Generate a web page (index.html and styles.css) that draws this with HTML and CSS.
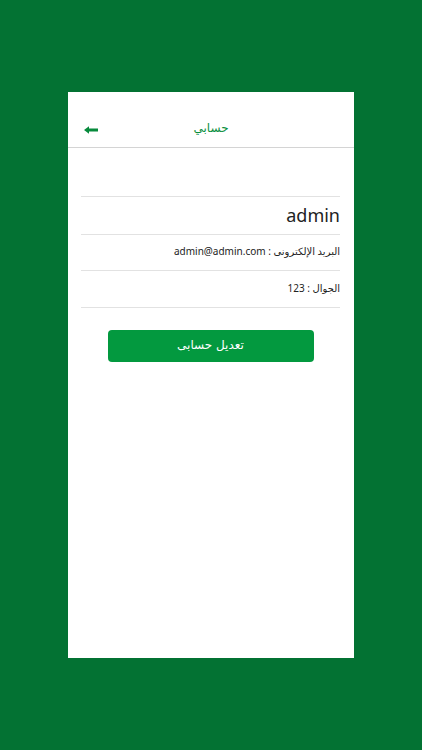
FILE: index.html
```html
<!DOCTYPE html>
<html lang="ar" dir="rtl">
<head>
<meta charset="utf-8">
<link rel="stylesheet" href="styles.css">
</head>
<body>
<div class="card">
  <header class="bar">
    <span class="title">حسابي</span>
    <span class="back" aria-label="back">
      <svg width="15" height="8" viewBox="0 0 15 8"><path d="M0 4 L5 0.3 L5 2.4 L14 2.4 L14 5.6 L5 5.6 L5 7.7 Z" fill="#078a3c"/></svg>
    </span>
  </header>
  <main class="content">
    <div class="row name">admin</div>
    <div class="row info">البريد الإلكترونى : admin@admin.com</div>
    <div class="row info last">الجوال : 123</div>
    <div class="actions"><button class="btn">تعديل حسابى</button></div>
  </main>
</div>
</body>
</html>
```
FILE: styles.css
```css
html, body { margin: 0; padding: 0; }
body {
  background: #037233;
  width: 422px;
  height: 750px;
  font-family: "Noto Sans", "DejaVu Sans", sans-serif;
  overflow: hidden;
  padding-top: 92px;
  box-sizing: border-box;
}
.card {
  background: #fff;
  width: 286px;
  height: 566px;
  margin: 0 auto;
  box-sizing: border-box;
}
.bar {
  height: 56px;
  border-bottom: 1px solid #d4d4d4;
  box-sizing: border-box;
  position: relative;
  display: flex;
  align-items: center;
  justify-content: center;
  padding-top: 17px;
}
.title {
  color: #0a8f3e;
  font-size: 12px;
  font-family: "DejaVu Sans", sans-serif;
}
.back {
  position: absolute;
  left: 16px;
  top: 34px;
  line-height: 0;
}
.content {
  padding: 48px 14px 0 13px;
}
.row {
  border-top: 1px solid #e2e2e2;
  display: flex;
  align-items: center;
  color: #222;
  box-sizing: border-box;
}
.name {
  height: 38px;
  font-size: 18px;
  padding-bottom: 1px;
}
.info {
  height: 36px;
  font-size: 10px;
  color: #222;
  padding-bottom: 3px;
}
.last { border-bottom: 1px solid #e2e2e2; height: 38px; }
.actions {
  display: flex;
  justify-content: center;
  padding-top: 22px;
}
.btn {
  width: 206px;
  height: 32px;
  background: #03993f;
  color: #fff;
  border: none;
  border-radius: 4px;
  font-family: "DejaVu Sans", sans-serif;
  font-size: 12px;
  padding-bottom: 3px;
}
```
